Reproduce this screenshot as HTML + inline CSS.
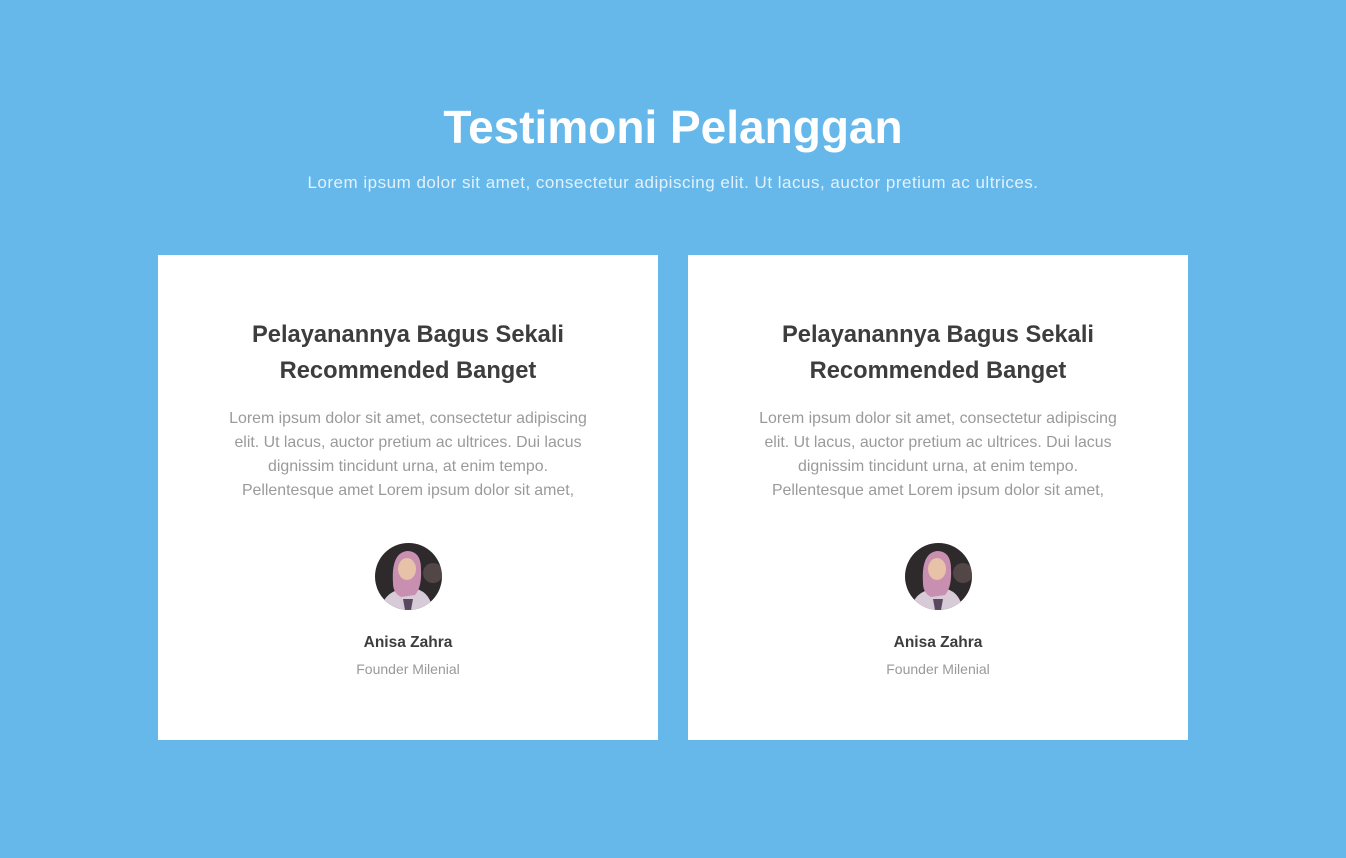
<!DOCTYPE html>
<html><head><style>
*{margin:0;padding:0;box-sizing:border-box}
body{width:1346px;height:858px;background:#66b8eb;font-family:"Liberation Sans",sans-serif;position:relative;overflow:hidden}
h1{position:absolute;top:99px;left:0;width:1346px;text-align:center;color:#fff;font-size:46px;font-weight:bold;line-height:56px}
.sub{position:absolute;top:173px;left:0;width:1346px;text-align:center;color:#e2f1fb;font-size:17px;letter-spacing:0.5px}
.card{position:absolute;top:255px;width:500px;height:485px;background:#fff;text-align:center}
.card h2{position:absolute;top:62px;left:0;width:500px;font-size:23.7px;line-height:36px;color:#3d3d3d;font-weight:bold}
.card p{position:absolute;top:152px;left:0;width:500px;font-size:15.9px;line-height:24px;color:#9a9a9a;white-space:nowrap}
.av{position:absolute;top:288px;left:217px;width:67px;height:67px;border-radius:50%;overflow:hidden}
.nm{position:absolute;top:379px;left:0;width:500px;font-size:15.5px;font-weight:bold;color:#3d3d3d}
.rl{position:absolute;top:406px;left:0;width:500px;font-size:14px;color:#999}
</style></head><body>
<h1>Testimoni Pelanggan</h1>
<div class="sub">Lorem ipsum dolor sit amet, consectetur adipiscing elit. Ut lacus, auctor pretium ac ultrices.</div>
<div class="card" style="left:158px">
<h2>Pelayanannya Bagus Sekali<br>Recommended Banget</h2>
<p>Lorem ipsum dolor sit amet, consectetur adipiscing<br>elit. Ut lacus, auctor pretium ac ultrices. Dui lacus<br>dignissim tincidunt urna, at enim tempo.<br>Pellentesque amet Lorem ipsum dolor sit amet,</p>
<div class="av"><svg width="67" height="67" viewBox="0 0 67 67"><rect width="67" height="67" fill="#2e2a2c"/><circle cx="58" cy="30" r="10" fill="#6a5a5a" opacity=".6"/><path d="M5 67 Q10 48 28 46 L42 46 Q55 50 58 67Z" fill="#d8cbd8"/><path d="M18 40 Q16 10 32 8 Q46 8 46 26 Q47 44 40 52 L26 54 Q18 50 18 40Z" fill="#c98fb0"/><ellipse cx="32" cy="26" rx="9" ry="11" fill="#e8c2a8"/><path d="M28 56 L38 56 L36 67 L30 67Z" fill="#5a4860"/></svg></div>
<div class="nm">Anisa Zahra</div><div class="rl">Founder Milenial</div>
</div>
<div class="card" style="left:688px">
<h2>Pelayanannya Bagus Sekali<br>Recommended Banget</h2>
<p>Lorem ipsum dolor sit amet, consectetur adipiscing<br>elit. Ut lacus, auctor pretium ac ultrices. Dui lacus<br>dignissim tincidunt urna, at enim tempo.<br>Pellentesque amet Lorem ipsum dolor sit amet,</p>
<div class="av"><svg width="67" height="67" viewBox="0 0 67 67"><rect width="67" height="67" fill="#2e2a2c"/><circle cx="58" cy="30" r="10" fill="#6a5a5a" opacity=".6"/><path d="M5 67 Q10 48 28 46 L42 46 Q55 50 58 67Z" fill="#d8cbd8"/><path d="M18 40 Q16 10 32 8 Q46 8 46 26 Q47 44 40 52 L26 54 Q18 50 18 40Z" fill="#c98fb0"/><ellipse cx="32" cy="26" rx="9" ry="11" fill="#e8c2a8"/><path d="M28 56 L38 56 L36 67 L30 67Z" fill="#5a4860"/></svg></div>
<div class="nm">Anisa Zahra</div><div class="rl">Founder Milenial</div>
</div>
</body></html>
